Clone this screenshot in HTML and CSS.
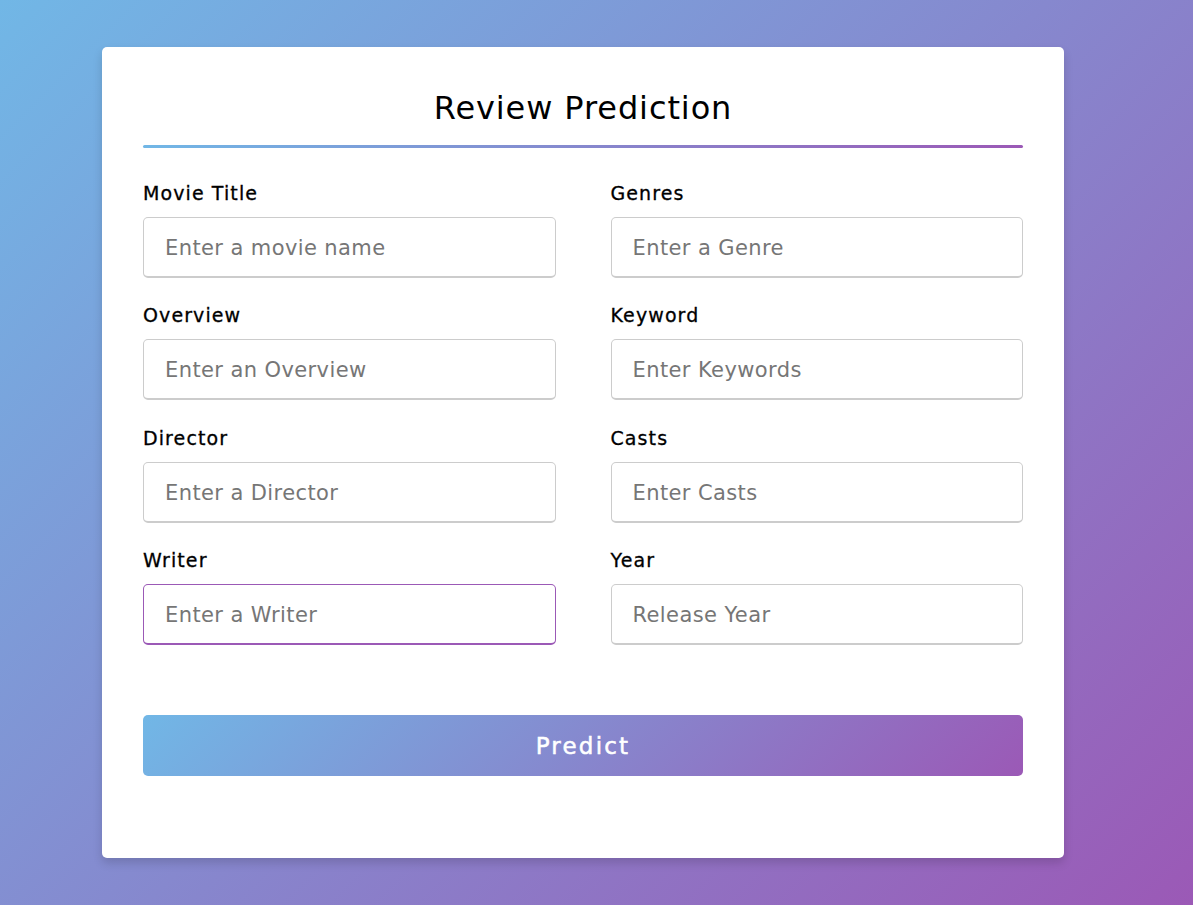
FILE: index.html
```html
<!DOCTYPE html>
<html lang="en">
<head>
<meta charset="utf-8">
<title>Review Prediction</title>
<link rel="stylesheet" href="styles.css">
</head>
<body>
<div class="card">
  <div class="title">Review Prediction</div>
  <div class="rule"></div>
  <form class="form">
    <div class="grid">
      <div class="field"><span class="label">Movie Title</span><input type="text" placeholder="Enter a movie name"></div>
      <div class="field"><span class="label">Genres</span><input type="text" placeholder="Enter a Genre"></div>
      <div class="field"><span class="label">Overview</span><input type="text" placeholder="Enter an Overview"></div>
      <div class="field"><span class="label">Keyword</span><input type="text" placeholder="Enter Keywords"></div>
      <div class="field"><span class="label">Director</span><input type="text" placeholder="Enter a Director"></div>
      <div class="field"><span class="label">Casts</span><input type="text" placeholder="Enter Casts"></div>
      <div class="field"><span class="label">Writer</span><input class="focused" type="text" placeholder="Enter a Writer"></div>
      <div class="field"><span class="label">Year</span><input type="text" placeholder="Release Year"></div>
    </div>
    <button type="button" class="btn">Predict</button>
  </form>
</div>
</body>
</html>
```
FILE: styles.css
```css
* { box-sizing: border-box; }
html, body { height: 100%; }
body {
  margin: 0;
  background: linear-gradient(135deg, #71b7e6, #9b59b6);
  font-family: "DejaVu Sans", "Noto Sans", sans-serif;
  display: flex;
  justify-content: flex-start;
  align-items: flex-start;
  padding: 47px 0 0 102px;
}
.card {
  width: 962px;
  height: 811px;
  background: #fff;
  border-radius: 5px;
  padding: 82px 41px 0;
  box-shadow: 0 5px 10px rgba(0,0,0,0.15);
}
.title {
  font-size: 32px;
  line-height: 46px;
  letter-spacing: 0.9px;
  text-align: center;
  color: #000;
  margin-top: -44px;
}
.rule {
  height: 3px;
  border-radius: 3px;
  margin-top: 14px;
  background: linear-gradient(90deg, #71b7e6, #9b59b6);
}
.grid {
  display: grid;
  grid-template-columns: 1fr 1fr;
  column-gap: 55px;
  row-gap: 22.4px;
  margin-top: 30px;
}
.field { display: flex; flex-direction: column; }
.label {
  font-size: 19px;
  line-height: 30px;
  letter-spacing: 1.1px;
  color: #000;
  margin-bottom: 9px;
  -webkit-text-stroke: 0.3px #000;
}
input {
  height: 61px;
  width: 100%;
  border: 1px solid #ccc;
  border-bottom-width: 2px;
  border-radius: 5px;
  padding: 2px 0 0 21px;
  font-family: inherit;
  font-size: 21px;
  letter-spacing: 0.4px;
  color: #333;
  outline: none;
}
input::placeholder { color: #767676; }
input.focused { border-color: #9b59b6; }
.btn {
  display: block;
  width: 100%;
  height: 61px;
  margin-top: 70px;
  border: none;
  border-radius: 5px;
  background: linear-gradient(135deg, #71b7e6, #9b59b6);
  color: #fff;
  font-family: inherit;
  font-size: 23px;
  letter-spacing: 2.2px;
  -webkit-text-stroke: 0.5px #fff;
}
```
